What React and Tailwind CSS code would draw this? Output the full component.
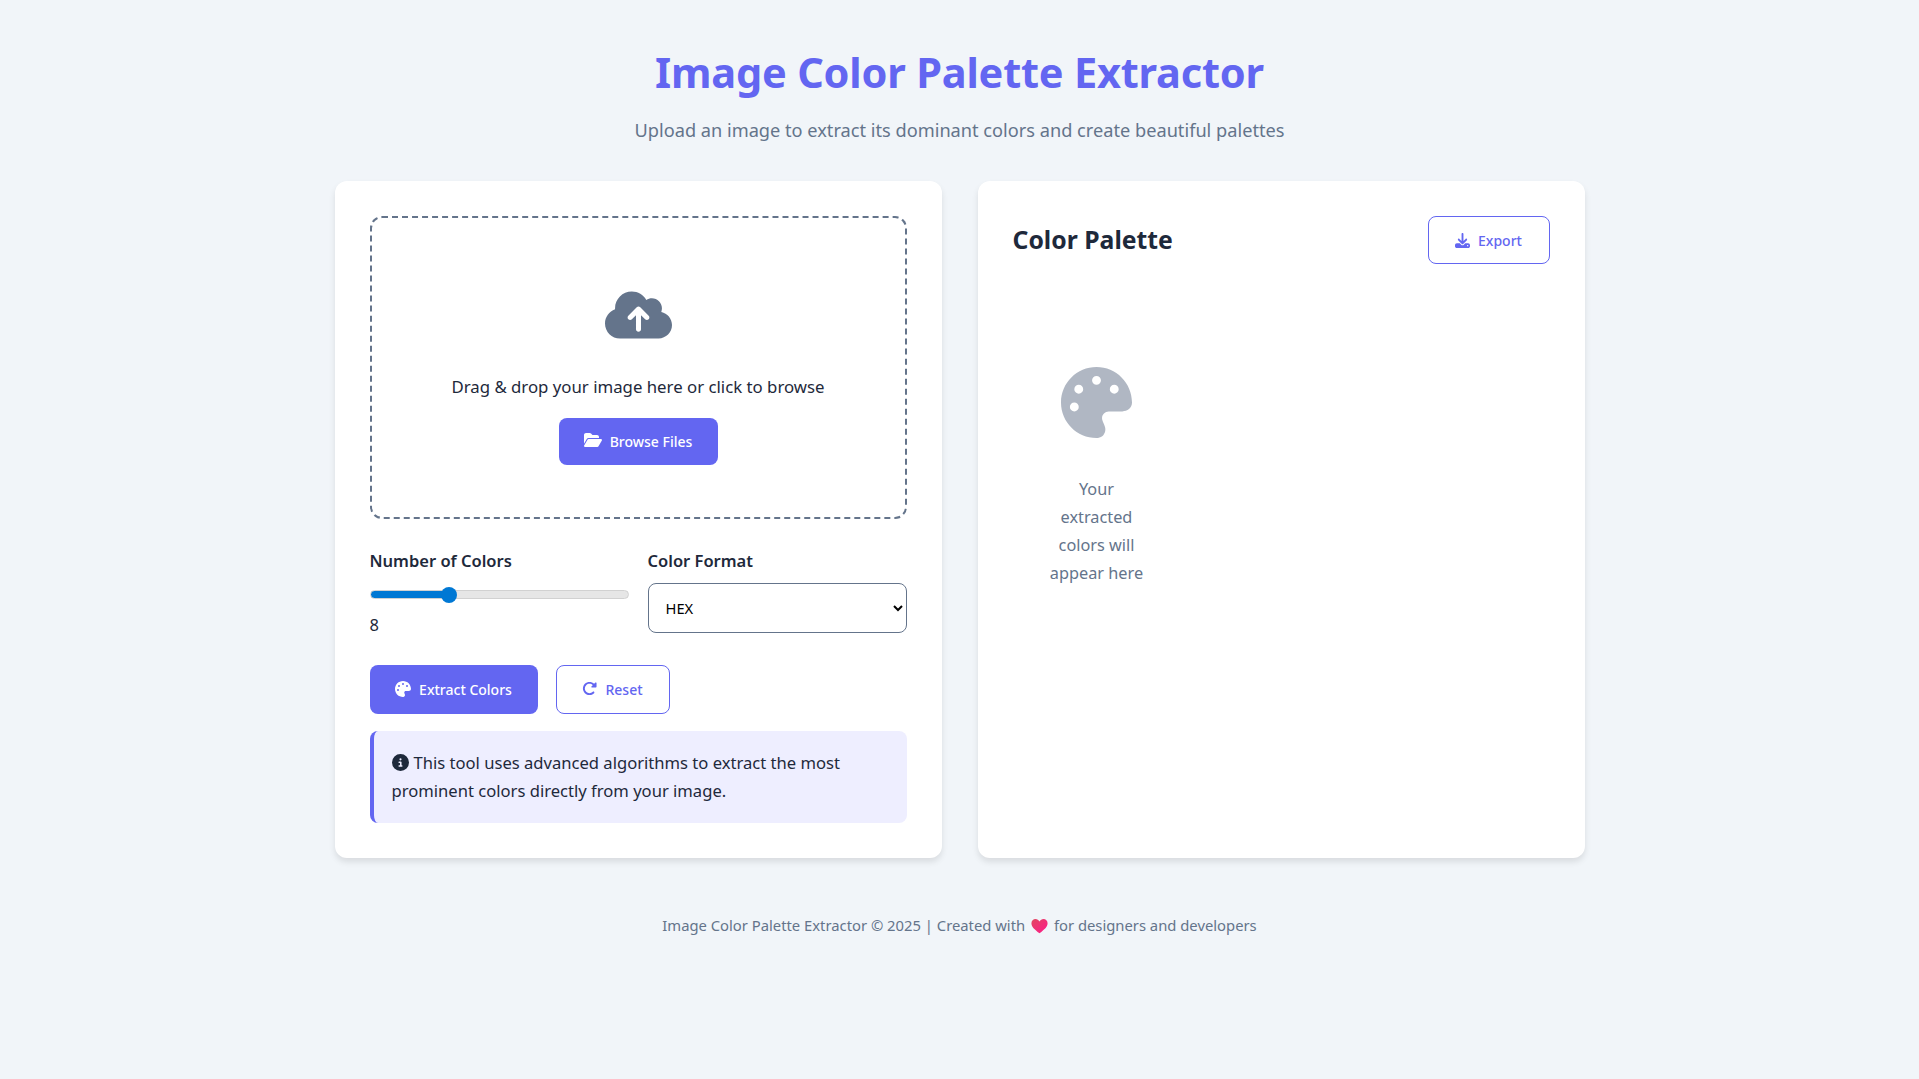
import { FaCloudArrowUp, FaFolderOpen, FaPalette, FaRotateRight, FaCircleInfo, FaDownload } from "react-icons/fa6";

function Heart() {
  return (
    <svg viewBox="0 0 20 18" className="inline-block w-[17px] h-[16px] mx-[2px] align-[-3px]">
      <defs>
        <linearGradient id="heart" x1="0" y1="0" x2="1" y2="1">
          <stop offset="0" stopColor="#e0475f" />
          <stop offset="1" stopColor="#ff1a8c" />
        </linearGradient>
      </defs>
      <path d="M10 17.5C4 13 .5 9.8.5 5.700.5 2.800 2.700.8 5.300.8c2 0 3.600 1 4.700 2.900C11.100 1.800 12.700.8 14.700.8c2.600 0 4.800 2 4.800 4.900 0 4.100-3.500 7.300-9.500 11.800z" fill="url(#heart)" />
    </svg>
  );
}

export default function App() {
  return (
    <div className="min-h-[1079px] bg-[#f1f5f9] text-[#1e293b] font-['Noto_Sans',sans-serif] pt-[40px]">
      <header className="text-center mb-[36px]">
        <h1 className="text-[41.5px] leading-[64px] font-bold tracking-[-0.2px] text-[#6366f1]">Image Color Palette Extractor</h1>
        <p className="text-[18.2px] leading-[30px] mt-[11px] text-[#64748b]">
          Upload an image to extract its dominant colors and create beautiful palettes
        </p>
      </header>

      <main className="w-[1250px] mx-auto grid grid-cols-2 gap-[36px]">
        <section className="bg-white rounded-[12px] p-[35px] shadow-[0_4px_6px_rgba(0,0,0,0.1)]">
          <div className="h-[303px] border-2 border-dashed border-[#64748b] rounded-[12px] flex flex-col items-center pt-[70px]">
            <FaCloudArrowUp className="text-[#64748b] w-[67px] h-[54px]" />
            <p className="mt-[31px] text-[16.8px] leading-[28px]">Drag &amp; drop your image here or click to browse</p>
            <button className="mt-[17px] w-[159px] h-[47px] rounded-[8px] bg-[#6366f1] text-white text-[14px] font-medium flex items-center justify-center gap-[8px]">
              <FaFolderOpen className="w-[18px] h-[16px] -mt-[3px]" />
              Browse Files
            </button>
          </div>

          <div className="grid grid-cols-2 gap-[19px] mt-[28px]">
            <div>
              <label className="block text-[16.5px] leading-[28px] font-semibold">Number of Colors</label>
              <input
                type="range"
                min="3"
                max="20"
                defaultValue="8"
                className="block w-full h-[9px] mt-[15px] appearance-none rounded-full border border-[#d1d1d1] bg-[linear-gradient(to_right,#0078d4_30%,#e6e6e6_30%)] [&::-webkit-slider-thumb]:appearance-none [&::-webkit-slider-thumb]:w-[16px] [&::-webkit-slider-thumb]:h-[16px] [&::-webkit-slider-thumb]:rounded-full [&::-webkit-slider-thumb]:bg-[#0078d4]"
              />
              <span className="block mt-[12px] text-[16.5px] leading-[28px]">8</span>
            </div>
            <div>
              <label className="block text-[16.5px] leading-[28px] font-semibold">Color Format</label>
              <select className="block w-full h-[50px] mt-[8px] px-[13px] border border-[#64748b] rounded-[8px] bg-white text-[14.700px] text-black">
                <option>HEX</option>
                <option>RGB</option>
                <option>HSL</option>
              </select>
            </div>
          </div>

          <div className="flex gap-[18px] mt-[26px]">
            <button className="w-[168px] h-[49px] rounded-[8px] bg-[#6366f1] text-white text-[14px] font-medium flex items-center justify-center gap-[8px]">
              <FaPalette className="w-[16px] h-[16px] -mt-[2px]" />
              Extract Colors
            </button>
            <button className="w-[114px] h-[49px] rounded-[8px] border border-[#6366f1] text-[#6366f1] text-[14px] font-medium flex items-center justify-center gap-[8px]">
              <FaRotateRight className="w-[15px] h-[15px] -mt-[2px]" />
              Reset
            </button>
          </div>

          <div className="mt-[17px] h-[92px] rounded-[8px] border-l-4 border-[#6366f1] bg-[#eef] pl-[18px] pr-[16px] py-[18px] text-[16.6px] leading-[28px]">
            <FaCircleInfo className="inline-block w-[17px] h-[17px] mr-[5px] align-[-2px]" />
            This tool uses advanced algorithms to extract the most prominent colors directly from your image.
          </div>
        </section>

        <section className="bg-white rounded-[12px] p-[35px] shadow-[0_4px_6px_rgba(0,0,0,0.1)]">
          <div className="flex items-center justify-between">
            <h2 className="text-[24.75px] leading-[40px] font-bold">Color Palette</h2>
            <button className="w-[122px] h-[48px] rounded-[8px] border border-[#6366f1] text-[#6366f1] text-[14px] font-medium flex items-center justify-center gap-[8px]">
              <FaDownload className="w-[15px] h-[15px]" />
              Export
            </button>
          </div>
          <div className="mt-[103px] ml-[34px] w-[100px] flex flex-col items-center text-center text-[#64748b]">
            <FaPalette className="w-[71px] h-[71px] text-[#b0b7c3]" />
            <p className="mt-[37px] text-[16.3px] leading-[28px]">Your extracted colors will appear here</p>
          </div>
        </section>
      </main>

      <footer className="mt-[54px] text-center text-[14.8px] leading-[26px] text-[#64748b]">
        Image Color Palette Extractor © 2025 | Created with <Heart /> for designers and developers
      </footer>
    </div>
  );
}
